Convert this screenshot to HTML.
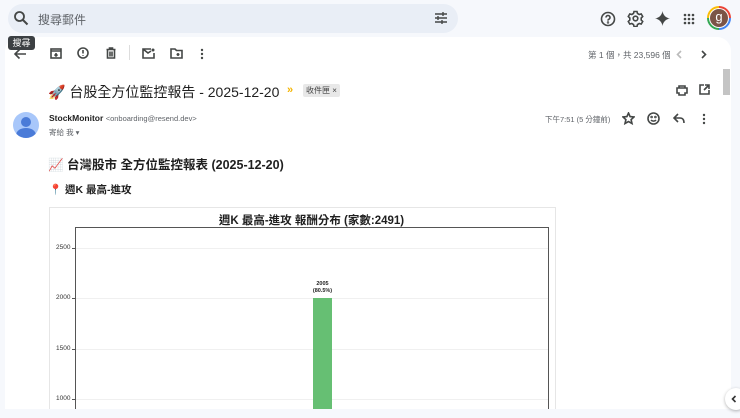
<!DOCTYPE html>
<html><head><meta charset="utf-8"><style>
*{margin:0;padding:0;box-sizing:border-box}
body{width:740px;height:418px;overflow:hidden;background:#f6f8fc;font-family:"Liberation Sans","Noto Sans CJK TC",sans-serif;position:relative;color:#1f1f1f}
.abs{position:absolute}
svg{display:block}
.ic{position:absolute;fill:none;stroke:#444746;stroke-width:1.6}
</style></head><body>
<div class="abs" style="left:8px;top:4px;width:450px;height:29px;background:#e9eef6;border-radius:15px"></div>
<svg class="ic" style="left:13px;top:10px" width="16" height="16" viewBox="0 0 16 16"><circle cx="6.5" cy="6.5" r="4.5" stroke-width="1.8"/><path d="M10 10l4.5 4.5" stroke-width="2"/></svg>
<div class="abs" style="left:38px;top:11px;font-size:12px;color:#5f6368">搜尋郵件</div>
<svg class="ic" style="left:434px;top:11px" width="14" height="14" viewBox="0 0 14 14"><path d="M1 3h12M1 7h12M1 11h12"/><path d="M9 1v4M4 5v4M8 9v4" stroke-width="1.4"/></svg>
<svg class="ic" style="left:600px;top:11px" width="16" height="16" viewBox="0 0 16 16"><circle cx="8" cy="8" r="6.5"/><path d="M6 6.5a2 2 0 1 1 2.6 1.9c-.5.2-.6.6-.6 1.2" /><circle cx="8" cy="11.5" r=".4"/></svg>
<svg class="ic" style="left:627px;top:10px" width="17" height="17" viewBox="0 0 17 17"><circle cx="8.5" cy="8.5" r="2.3"/><path d="M7 1.5h3l.5 2 1.7 1 2-.6 1.5 2.6-1.5 1.5v2l1.5 1.5-1.5 2.6-2-.6-1.7 1-.5 2H7l-.5-2-1.7-1-2 .6-1.5-2.6 1.5-1.5v-2L1.3 6.5l1.5-2.6 2 .6 1.7-1z"/></svg>
<svg class="abs" style="left:655px;top:11px" width="15" height="15" viewBox="0 0 15 15"><path d="M7.5 0C8 4 11 7 15 7.5 11 8 8 11 7.5 15 7 11 4 8 0 7.5 4 7 7 4 7.5 0z" fill="#444746"/></svg>
<svg class="abs" style="left:683px;top:13px" width="12" height="12" viewBox="0 0 12 12" fill="#444746"><circle cx="2" cy="2" r="1.3"/><circle cx="6" cy="2" r="1.3"/><circle cx="10" cy="2" r="1.3"/><circle cx="2" cy="6" r="1.3"/><circle cx="6" cy="6" r="1.3"/><circle cx="10" cy="6" r="1.3"/><circle cx="2" cy="10" r="1.3"/><circle cx="6" cy="10" r="1.3"/><circle cx="10" cy="10" r="1.3"/></svg>
<div class="abs" style="left:707px;top:6px;width:24px;height:24px;border-radius:50%;background:conic-gradient(#ea4335 0 25%,#4285f4 25% 50%,#34a853 50% 75%,#fbbc05 75%)"></div>
<div class="abs" style="left:709px;top:8px;width:20px;height:20px;border-radius:50%;background:#fff"></div>
<div class="abs" style="left:710px;top:9px;width:18px;height:18px;border-radius:50%;background:#7b5447;color:#fff;font-size:13px;text-align:center;line-height:16px">g</div>

<div class="abs" style="left:5px;top:37px;width:726px;height:372px;background:#fff;border-radius:14px 14px 0 0"></div>
<div class="abs" style="left:723px;top:69px;width:7px;height:26px;background:#c4c4c4"></div>

<svg class="ic" style="left:13px;top:47px" width="14" height="14" viewBox="0 0 14 14"><path d="M13 7H2M6.5 2.5L2 7l4.5 4.5"/></svg>
<div class="abs" style="left:8px;top:36px;width:27px;height:14px;background:#3c4043;color:#fff;font-size:9px;border-radius:3px;text-align:center;line-height:14px">搜尋</div>
<svg class="ic" style="left:50px;top:48px" width="12" height="11" viewBox="0 0 12 11" stroke-width="1.3"><rect x="1" y="1" width="10" height="9"/><path d="M1 3h10M6 5v3M4.5 6.5L6 8l1.5-1.5"/></svg>
<svg class="ic" style="left:77px;top:47px" width="12" height="12" viewBox="0 0 12 12" stroke-width="1.3"><circle cx="6" cy="6" r="5"/><path d="M6 3v3.5M6 8v.8"/></svg>
<svg class="ic" style="left:105px;top:47px" width="12" height="12" viewBox="0 0 12 12" stroke-width="1.3"><path d="M1.5 2.5h9M4.5 2.5V1h3v1.5M2.5 2.5v8.5h7V2.5M5 4.5v5M7 4.5v5"/></svg>
<div class="abs" style="left:129px;top:45px;width:1px;height:15px;background:#ddd"></div>
<svg class="ic" style="left:142px;top:48px" width="13" height="11" viewBox="0 0 13 11" stroke-width="1.3"><path d="M9 1H1v9h11V5M1 1l5 4 3-2"/><circle cx="11" cy="2" r="1.5" fill="#444746" stroke="none"/></svg>
<svg class="ic" style="left:170px;top:48px" width="13" height="11" viewBox="0 0 13 11" stroke-width="1.3"><path d="M1 1h4l1.5 1.5H12V10H1z"/><path d="M6.5 6.5h3M8 5v3"/></svg>
<svg class="abs" style="left:200px;top:48px" width="4" height="12" viewBox="0 0 4 12" fill="#444746"><circle cx="2" cy="2" r="1.2"/><circle cx="2" cy="6" r="1.2"/><circle cx="2" cy="10" r="1.2"/></svg>
<div class="abs" style="left:588px;top:49px;font-size:8.5px;color:#5f6368">第 1 個，共 23,596 個</div>
<svg class="ic" style="left:676px;top:50px;stroke:#bbb" width="6" height="9" viewBox="0 0 6 9" stroke-width="1.3"><path d="M5 1L1.5 4.5 5 8"/></svg>
<svg class="ic" style="left:701px;top:50px" width="6" height="9" viewBox="0 0 6 9" stroke-width="1.4"><path d="M1 1l3.5 3.5L1 8"/></svg>

<div class="abs" style="left:48px;top:82px;font-size:14px;white-space:nowrap">🚀 台股全方位監控報告 - 2025-12-20</div>
<div class="abs" style="left:287px;top:84px;font-size:11px;color:#f4b400;font-weight:bold">»</div>
<div class="abs" style="left:303px;top:84px;height:13px;padding:0 3px;background:#e8e8e8;border-radius:2px;font-size:8px;line-height:13px;color:#444">收件匣 ×</div>
<svg class="ic" style="left:676px;top:85px" width="12" height="11" viewBox="0 0 12 11" stroke-width="1.3"><path d="M3 3V1h6v2M1 3h10v5H9v2H3V8H1z"/></svg>
<svg class="ic" style="left:699px;top:84px" width="11" height="11" viewBox="0 0 11 11" stroke-width="1.3"><path d="M5 1H1v9h9V6M6 1h4v4M10 1L5 6"/></svg>

<div class="abs" style="left:13px;top:112px;width:26px;height:26px;border-radius:50%;background:#a8c7fa;overflow:hidden">
<div class="abs" style="left:8px;top:5px;width:10px;height:10px;border-radius:50%;background:#4a7bd8"></div>
<div class="abs" style="left:3px;top:16px;width:20px;height:14px;border-radius:50%;background:#4a7bd8"></div></div>
<div class="abs" style="left:49px;top:113px;font-size:8.5px;white-space:nowrap"><b>StockMonitor</b> <span style="color:#5f6368;font-size:7.5px">&lt;onboarding@resend.dev&gt;</span></div>
<div class="abs" style="left:49px;top:127px;font-size:7.5px;color:#5f6368">寄給 我 ▾</div>
<div class="abs" style="left:545px;top:114px;font-size:7.5px;color:#5f6368">下午7:51 (5 分鐘前)</div>
<svg class="ic" style="left:622px;top:112px" width="13" height="13" viewBox="0 0 13 13" stroke-width="1.2"><path d="M6.5 1l1.6 3.6 3.9.4-2.9 2.6.9 3.9-3.5-2-3.5 2 .9-3.9L1 5l3.9-.4z"/></svg>
<svg class="ic" style="left:647px;top:112px" width="13" height="13" viewBox="0 0 13 13" stroke-width="1.3"><circle cx="6.5" cy="6.5" r="5.5"/><path d="M4 8c1.3 1.5 3.7 1.5 5 0"/><circle cx="4.6" cy="5" r=".5"/><circle cx="8.4" cy="5" r=".5"/></svg>
<svg class="ic" style="left:673px;top:113px" width="12" height="11" viewBox="0 0 12 11" stroke-width="1.4"><path d="M5 1L1 5l4 4M1 5h6c3 0 4 2 4 5"/></svg>
<svg class="abs" style="left:702px;top:113px" width="4" height="12" viewBox="0 0 4 12" fill="#444746"><circle cx="2" cy="2" r="1.2"/><circle cx="2" cy="6" r="1.2"/><circle cx="2" cy="10" r="1.2"/></svg>

<div class="abs" style="left:48px;top:154px;font-size:12.5px;font-weight:bold;white-space:nowrap">📈 台灣股市 全方位監控報表 (2025-12-20)</div>
<div class="abs" style="left:49px;top:182px;font-size:10.5px;font-weight:bold;white-space:nowrap"><span style="color:#e53935">📍</span> 週K 最高-進攻</div>

<div class="abs" style="left:49px;top:207px;width:507px;height:202px;border:1px solid #e6e6e6;border-bottom:none"></div>
<div class="abs" style="left:75px;top:212px;width:473px;text-align:center;font-size:11.5px;font-weight:bold">週K 最高-進攻 報酬分布 (家數:2491)</div>
<div class="abs" style="left:75px;top:227px;width:474px;height:182px;border:1px solid #555;border-bottom:none"></div>
<div class="abs" style="left:76px;top:248px;width:472px;height:1px;background:#f0f0f0"></div>
<div class="abs" style="left:76px;top:298px;width:472px;height:1px;background:#f0f0f0"></div>
<div class="abs" style="left:76px;top:349px;width:472px;height:1px;background:#f0f0f0"></div>
<div class="abs" style="left:76px;top:399px;width:472px;height:1px;background:#f0f0f0"></div>
<div class="abs" style="left:56px;top:244px;font-size:6.5px;color:#333">2500</div>
<div class="abs" style="left:56px;top:294px;font-size:6.5px;color:#333">2000</div>
<div class="abs" style="left:56px;top:345px;font-size:6.5px;color:#333">1500</div>
<div class="abs" style="left:56px;top:395px;font-size:6.5px;color:#333">1000</div>
<div class="abs" style="left:72px;top:248px;width:3px;height:1px;background:#555"></div>
<div class="abs" style="left:72px;top:298px;width:3px;height:1px;background:#555"></div>
<div class="abs" style="left:72px;top:349px;width:3px;height:1px;background:#555"></div>
<div class="abs" style="left:72px;top:399px;width:3px;height:1px;background:#555"></div>
<div class="abs" style="left:313px;top:298px;width:19px;height:111px;background:#66bf73"></div>
<div class="abs" style="left:305px;top:281px;width:35px;text-align:center;font-size:5.5px;font-weight:bold;line-height:7px">2005<br>(80.5%)</div>

<div class="abs" style="left:725px;top:388px;width:22px;height:22px;border-radius:50%;background:#fff;box-shadow:0 1px 3px rgba(0,0,0,.3)"></div>
<svg class="ic" style="left:731px;top:395px;stroke:#333" width="6" height="8" viewBox="0 0 6 8" stroke-width="1.4"><path d="M4.5 1L1.5 4l3 3"/></svg>
</body></html>
